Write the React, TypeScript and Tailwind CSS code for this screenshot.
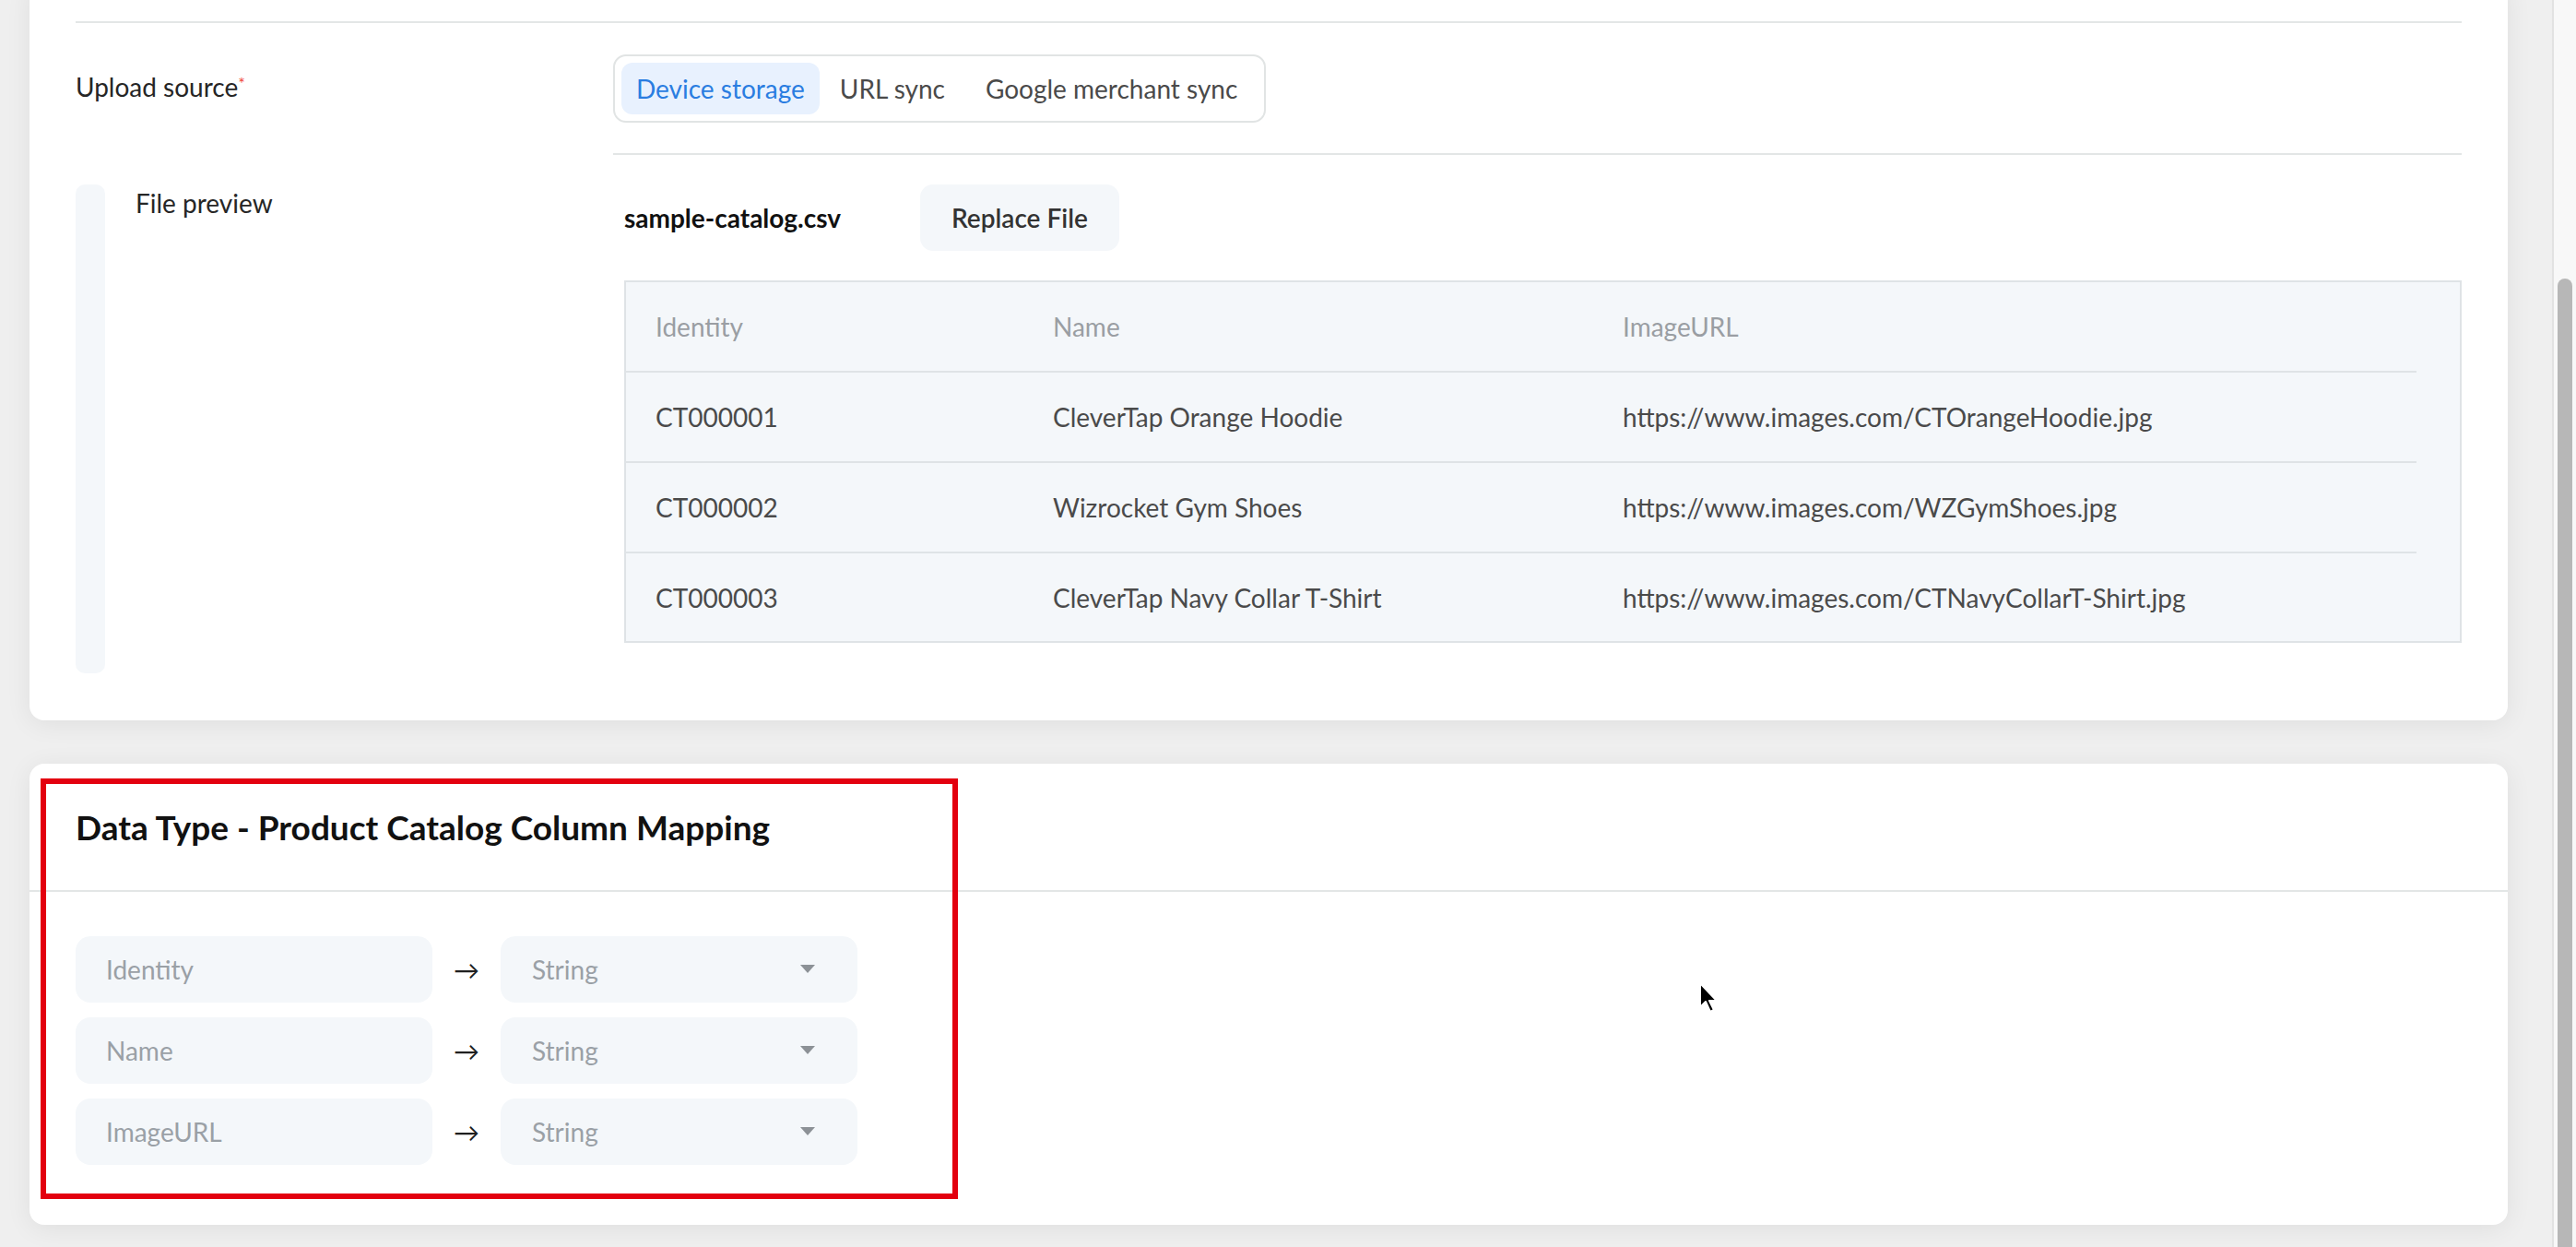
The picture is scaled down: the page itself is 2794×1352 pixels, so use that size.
import React from 'react';

const rows = [
  { id: 'CT000001', name: 'CleverTap Orange Hoodie', url: 'https://www.images.com/CTOrangeHoodie.jpg' },
  { id: 'CT000002', name: 'Wizrocket Gym Shoes', url: 'https://www.images.com/WZGymShoes.jpg' },
  { id: 'CT000003', name: 'CleverTap Navy Collar T-Shirt', url: 'https://www.images.com/CTNavyCollarT-Shirt.jpg' },
];

const columns = ['Identity', 'Name', 'ImageURL'];

function SourceTabs() {
  const tabs = ['Device storage', 'URL sync', 'Google merchant sync'];
  return (
    <div className="flex items-center rounded-[14px] border-2 border-[#e1e4e4] p-[7px]">
      {tabs.map((tab, i) => (
        <div
          key={tab}
          className={
            i === 0
              ? 'flex h-[56px] items-center rounded-[12px] bg-[#e8f1fe] px-[16px] text-[#2a7de1]'
              : 'flex h-[56px] items-center px-[22px] text-[#4a4a4a]'
          }
        >
          {tab}
        </div>
      ))}
    </div>
  );
}

function PreviewTable() {
  return (
    <div className="mt-[32px] border-2 border-[#dfe3e6] bg-[#f4f7fa] pr-[47px]">
      <div className="grid h-[98px] grid-cols-[431px_618px_1fr] items-center border-b-2 border-[#dfe3e6] pl-[32px] text-[#9a9ea3]">
        {columns.map(col => (
          <div key={col}>{col}</div>
        ))}
      </div>
      {rows.map((row, i) => (
        <div
          key={row.id}
          className={
            i < rows.length - 1
              ? 'grid h-[98px] grid-cols-[431px_618px_1fr] items-center border-b-2 border-[#dfe3e6] pl-[32px] text-[#4a4a4a]'
              : 'grid h-[95px] grid-cols-[431px_618px_1fr] items-center pl-[32px] text-[#4a4a4a]'
          }
        >
          <div>{row.id}</div>
          <div>{row.name}</div>
          <div>{row.url}</div>
        </div>
      ))}
    </div>
  );
}

function MappingRow({ field }: { field: string }) {
  return (
    <div className="flex items-center">
      <div className="flex h-[72px] w-[387px] items-center rounded-[16px] bg-[#f4f7fa] pl-[33px] text-[#9aa0a6]">
        {field}
      </div>
      <div className="flex w-[74px] justify-center text-[#1f1f1f]">→</div>
      <div className="flex h-[72px] w-[387px] items-center justify-between rounded-[16px] bg-[#f4f7fa] pr-[46px] pl-[34px] text-[#9aa0a6]">
        <span>String</span>
        <svg width="16" height="10" viewBox="0 0 16 10">
          <path d="M0 0h16L8 9z" fill="#8c9196" />
        </svg>
      </div>
    </div>
  );
}

export default function App() {
  return (
    <div className="relative flex h-[1352px] w-full overflow-hidden bg-[#efefef] font-['Lato',sans-serif] text-[28px] leading-[40px] text-[#262626]">
      <div className="flex-1 pr-[48px] pl-[32px]">
        <section className="-mt-[20px] rounded-[16px] bg-white px-[50px] pt-[43px] pb-[51px] shadow-[0_4px_28px_rgba(0,0,0,0.07)]">
          <div className="h-[2px] bg-[#e3e6e6]" />

          <div className="mt-[34px] flex items-center">
            <div className="w-[583px]">
              Upload source
              <span className="relative -top-[8px] text-[18px] text-[#f0443a]">*</span>
            </div>
            <SourceTabs />
          </div>
          <div className="mt-[33px] ml-[583px] h-[2px] bg-[#e3e6e6]" />

          <div className="mt-[32px] flex">
            <div className="flex w-[583px]">
              <div className="w-[32px] rounded-[10px] bg-[#f4f7fa]" />
              <div className="ml-[33px]">File preview</div>
            </div>
            <div className="flex-1 pb-[33px] pl-[12px]">
              <div className="flex h-[72px] items-center">
                <div className="w-[321px] font-bold text-[#111]">sample-catalog.csv</div>
                <button className="h-[72px] rounded-[14px] bg-[#f4f7fa] px-[34px] font-semibold text-[#333]">
                  Replace File
                </button>
              </div>
              <PreviewTable />
            </div>
          </div>
        </section>

        <section className="mt-[47px] rounded-[16px] bg-white pb-[65px] shadow-[0_4px_28px_rgba(0,0,0,0.07)]">
          <div className="flex h-[139px] items-center border-b-2 border-[#e3e6e6] px-[50px]">
            <h2 className="text-[37px] font-bold text-[#111]">Data Type - Product Catalog Column Mapping</h2>
          </div>
          <div className="flex flex-col gap-[16px] px-[50px] pt-[48px]">
            {columns.map(col => (
              <MappingRow key={col} field={col} />
            ))}
          </div>
        </section>
      </div>

      <div className="flex w-[26px] border-l-2 border-[#e2e2e2] bg-[#f8f8f8] pt-[302px] pl-[4px]">
        <div className="h-full w-[16px] rounded-t-full bg-[#b7b7b7]" />
      </div>

      <div className="pointer-events-none absolute top-[844px] left-[44px] h-[456px] w-[995px] border-[6px] border-[#e3000f]" />

      <svg className="absolute top-[1064px] left-[1842px]" width="24" height="36" viewBox="0 0 24 36">
        <path d="M2 2v26l6-6 5 11 4-2-5-10h8z" fill="#000" stroke="#fff" strokeWidth="2" strokeLinejoin="round" />
      </svg>
    </div>
  );
}
